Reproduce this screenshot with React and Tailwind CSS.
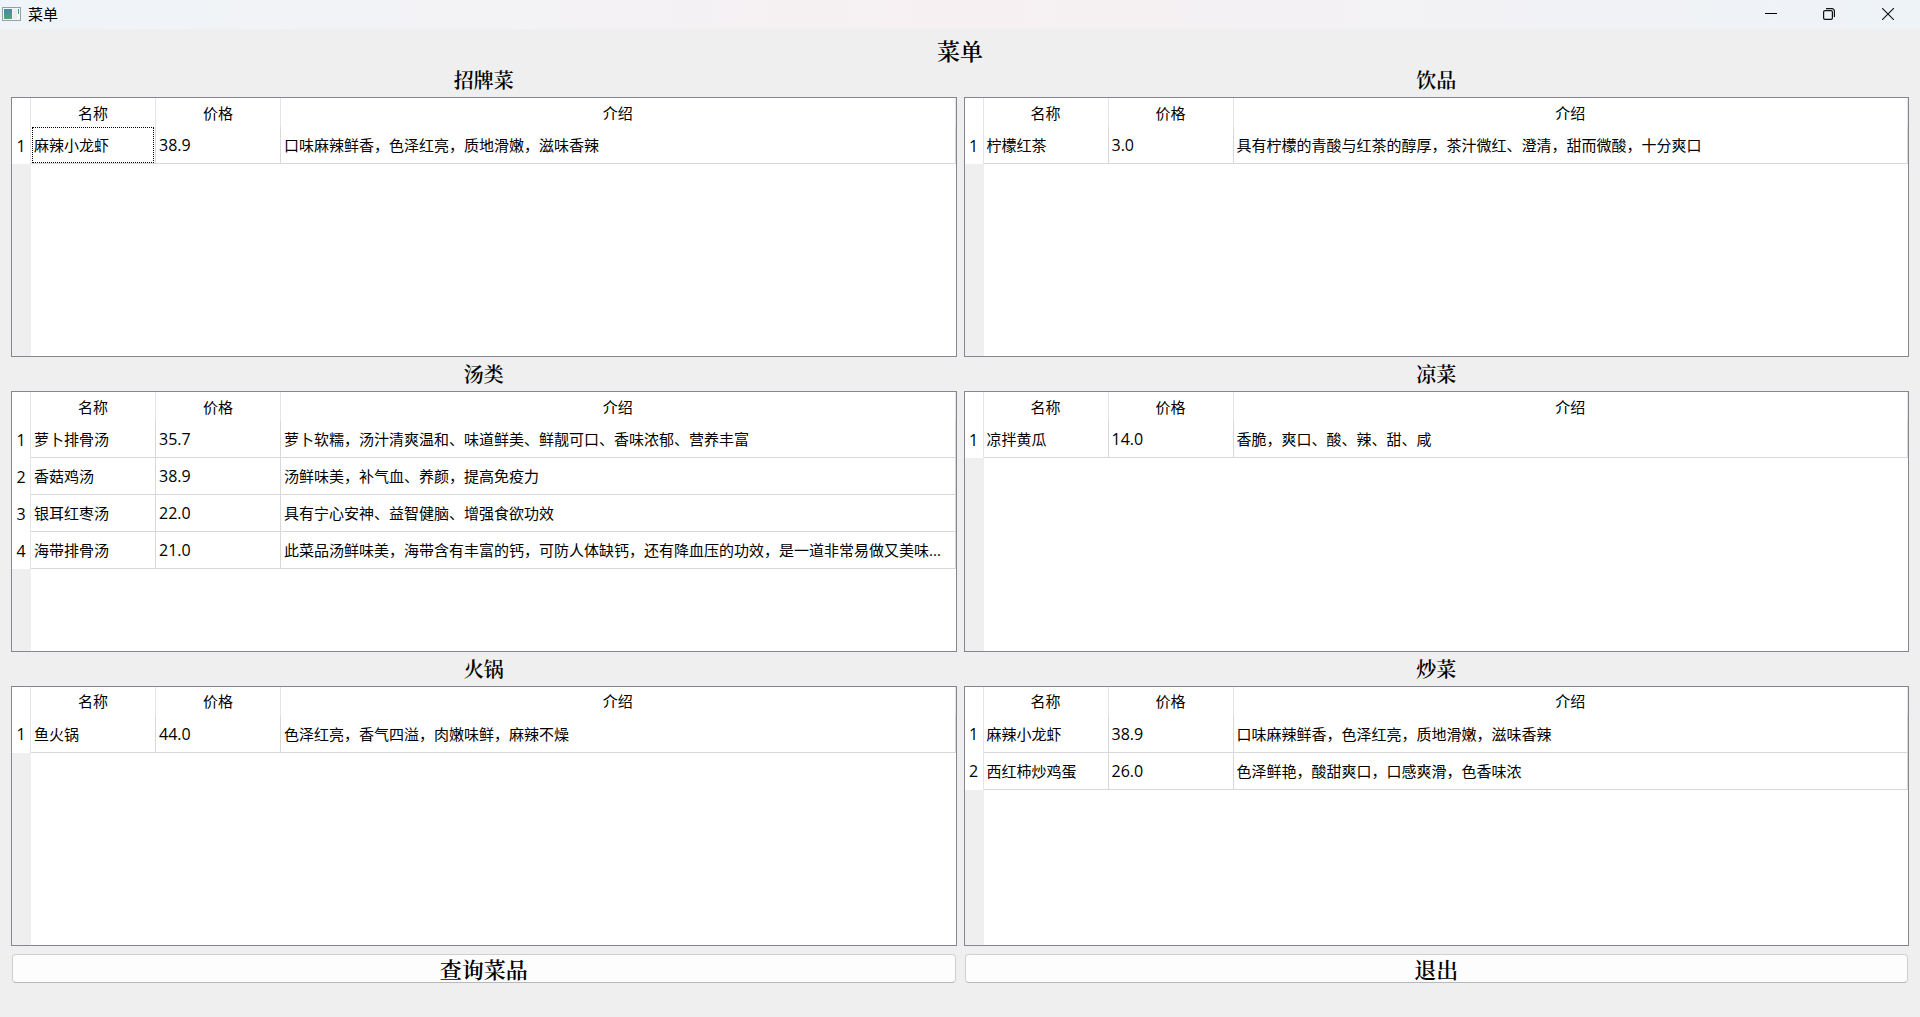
const sections = [
  { title: '招牌菜', rows: [['麻辣小龙虾', '38.9', '口味麻辣鲜香，色泽红亮，质地滑嫩，滋味香辣']], focused: true },
  { title: '饮品', rows: [['柠檬红茶', '3.0', '具有柠檬的青酸与红茶的醇厚，茶汁微红、澄清，甜而微酸，十分爽口']] },
  {
    title: '汤类',
    rows: [
      ['萝卜排骨汤', '35.7', '萝卜软糯，汤汁清爽温和、味道鲜美、鲜靓可口、香味浓郁、营养丰富'],
      ['香菇鸡汤', '38.9', '汤鲜味美，补气血、养颜，提高免疫力'],
      ['银耳红枣汤', '22.0', '具有宁心安神、益智健脑、增强食欲功效'],
      ['海带排骨汤', '21.0', '此菜品汤鲜味美，海带含有丰富的钙，可防人体缺钙，还有降血压的功效，是一道非常易做又美味...'],
    ],
  },
  { title: '凉菜', rows: [['凉拌黄瓜', '14.0', '香脆，爽口、酸、辣、甜、咸']] },
  { title: '火锅', rows: [['鱼火锅', '44.0', '色泽红亮，香气四溢，肉嫩味鲜，麻辣不燥']] },
  {
    title: '炒菜',
    rows: [
      ['麻辣小龙虾', '38.9', '口味麻辣鲜香，色泽红亮，质地滑嫩，滋味香辣'],
      ['西红柿炒鸡蛋', '26.0', '色泽鲜艳，酸甜爽口，口感爽滑，色香味浓'],
    ],
  },
];

const serif = "font-['Noto_Serif_CJK_SC','Noto_Sans_CJK_SC',serif] font-semibold";

function TitleBar() {
  return (
    <header className="flex h-[29px] shrink-0 items-center bg-linear-to-r from-[#eff4f8] via-[#f6f0f2] to-[#eef3f7] pb-[2px] pl-[2px]">
      <svg width="19" height="16" viewBox="0 0 19 16" aria-hidden="true">
        <defs>
          <linearGradient id="pane" x1="0" y1="0" x2="0" y2="1">
            <stop offset="0" stopColor="#4a86ae" />
            <stop offset="1" stopColor="#4fa673" />
          </linearGradient>
        </defs>
        <rect x="0.5" y="1.5" width="18" height="13" fill="#f4f5f5" stroke="#9a9fa5" />
        <rect x="2" y="3" width="8" height="10" fill="url(#pane)" />
        <rect x="11" y="3" width="4" height="10" fill="#eceeee" />
        <rect x="16" y="3" width="1" height="5" fill="url(#pane)" />
      </svg>
      <span className="ml-[7px] flex-1 leading-5">菜单</span>
      <button type="button" aria-label="最小化" className="flex h-full w-[58px] items-center justify-center">
        <svg width="12" height="12" viewBox="0 0 12 12" stroke="#000"><path d="M0 5.5H12" /></svg>
      </button>
      <button type="button" aria-label="还原" className="flex h-full w-[58px] items-center justify-center">
        <svg width="12" height="12" viewBox="0 0 12 12" fill="none" stroke="#111" strokeWidth="1.2">
          <rect x="0.6" y="2.6" width="8.8" height="8.8" rx="1.4" />
          <path d="M3 0.6H9A2.4 2.4 0 0 1 11.4 3V9" />
        </svg>
      </button>
      <button type="button" aria-label="关闭" className="mr-[2px] flex h-full w-[60px] items-center justify-center">
        <svg width="12" height="12" viewBox="0 0 12 12" stroke="#111" strokeWidth="1.1"><path d="M0 0L12 12M12 0L0 12" /></svg>
      </button>
    </header>
  );
}

function DishTable({ title, rows, focused }) {
  return (
    <section className="flex min-w-0 flex-col">
      <h2 className={`${serif} h-[34px] text-center text-[20px] leading-[34px]`}>{title}</h2>
      <div className="flex flex-1 flex-col border border-[#828790] bg-white">
        <table aria-label={title} className="w-full table-fixed border-separate border-spacing-0">
          <colgroup>
            <col className="w-[19px]" />
            <col className="w-[125px]" />
            <col className="w-[125px]" />
            <col />
          </colgroup>
          <thead>
            <tr className="h-[29px]">
              <td className="border-r border-[#e5e5e5] p-0" />
              {['名称', '价格', '介绍'].map((h) => (
                <th key={h} scope="col" className="border-r border-[#e5e5e5] p-0 font-normal leading-5">{h}</th>
              ))}
            </tr>
          </thead>
          <tbody>
            {rows.map(([name, price, text], i) => (
              <tr key={name} className="h-[37px]">
                <th scope="row" className="border-r border-[#e5e5e5] p-0 text-center text-[16px] font-normal leading-5">{i + 1}</th>
                <td className="border-r border-b border-[#d8d8d8] p-0">
                  <div className={focused ? 'mx-px flex h-9 items-center border border-dotted border-black pl-px leading-5' : 'pl-[3px] leading-5'}>{name}</div>
                </td>
                <td className="border-r border-b border-[#d8d8d8] p-0 pl-[3px] text-[16px] leading-5">{price}</td>
                <td className="truncate border-r border-b border-[#d8d8d8] p-0 pl-[3px] leading-5">{text}</td>
              </tr>
            ))}
          </tbody>
        </table>
        <div className="w-[19px] flex-1 bg-[#efefef]" />
      </div>
    </section>
  );
}

function ActionButton({ children }) {
  return (
    <button type="button" className={`${serif} mx-px h-[29px] rounded-[4px] border border-[#d0d0d0] border-b-[#b8b8b8] bg-[#fdfdfd] text-[22px] leading-[27px]`}>
      {children}
    </button>
  );
}

export default function App() {
  return (
    <div className="flex min-h-screen flex-col bg-[#efefef] font-['Open_Sans','Noto_Sans_CJK_SC',sans-serif] text-[15px] text-black">
      <TitleBar />
      <main className="flex flex-1 flex-col px-[11px] pt-[10px] pb-[34px]">
        <h1 className={`${serif} text-center text-[23px] leading-6`}>菜单</h1>
        <div className="grid flex-1 grid-cols-2 grid-rows-3 gap-x-[7px]">
          {sections.map((s) => <DishTable key={s.title} {...s} />)}
        </div>
        <div className="mt-2 grid grid-cols-2 gap-x-[7px]">
          <ActionButton>查询菜品</ActionButton>
          <ActionButton>退出</ActionButton>
        </div>
      </main>
    </div>
  );
}
